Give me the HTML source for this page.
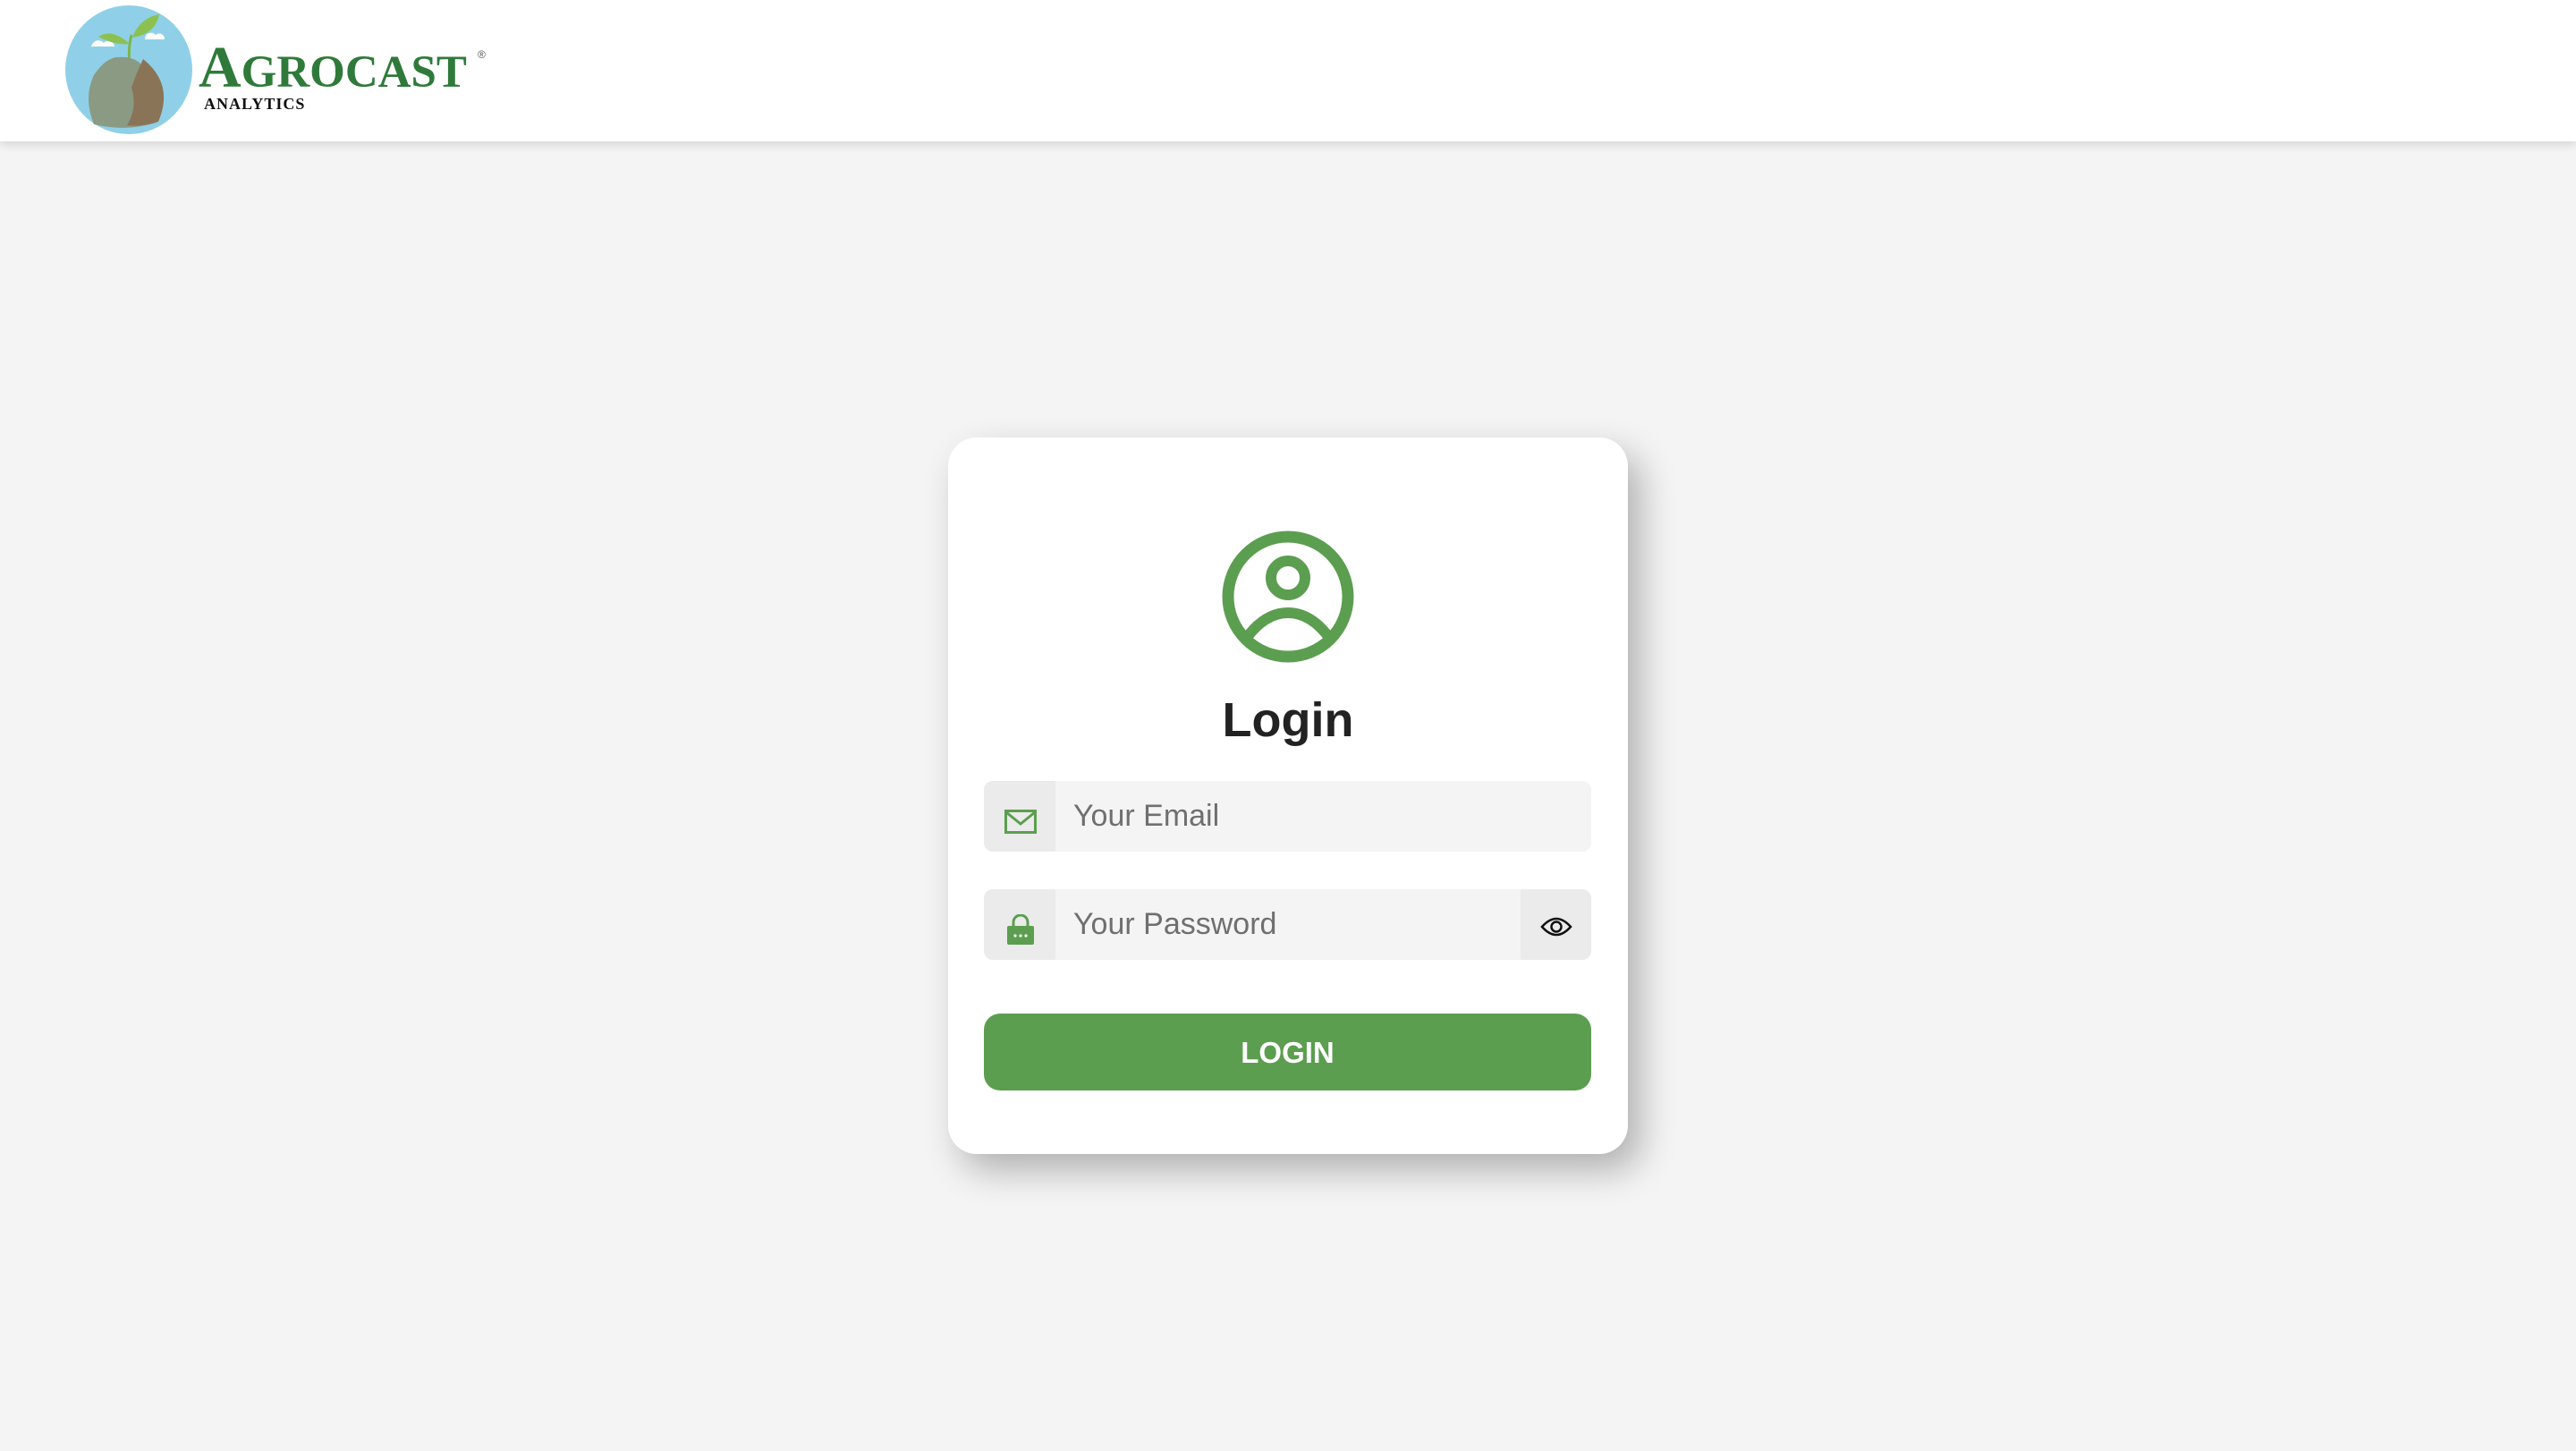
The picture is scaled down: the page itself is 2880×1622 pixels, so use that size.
<!DOCTYPE html>
<html><head><meta charset="utf-8"><style>
html,body{margin:0;padding:0;width:2880px;height:1622px;background:#f4f4f4;font-family:"Liberation Sans",sans-serif;overflow:hidden;position:relative}
.hdr{position:absolute;left:0;top:0;width:2880px;height:158px;background:#fff;box-shadow:0 4px 10px rgba(0,0,0,0.12)}
.card{position:absolute;left:1060px;top:489px;width:760px;height:801px;background:#fff;border-radius:32px;box-shadow:14px 18px 40px rgba(0,0,0,0.28)}
.inp{position:absolute;left:40px;width:679px;height:79px;background:#f4f4f4;border-radius:10px;overflow:hidden}
.ib{position:absolute;left:0;top:0;width:80px;height:79px;background:#ebebeb}
.ph{position:absolute;left:100px;top:0;line-height:79px;font-size:34px;color:#6f6f6f}
.btn{position:absolute;left:40px;top:644px;width:679px;height:86px;background:#5c9e50;border-radius:18px;color:#fff;font-weight:bold;font-size:33px;text-align:center;line-height:87px}
</style></head><body>
<div class="hdr">
<svg style="position:absolute;left:70px;top:4px" width="150" height="150" viewBox="0 0 150 150">
<ellipse cx="74" cy="74" rx="71" ry="72" fill="#8fd0e8"/>
<path d="M32 50 a8 8 0 0 1 14-6 a7 7 0 0 1 12 4 h-26z" fill="#fff"/>
<path d="M92 38 a7 7 0 0 1 12 -3 a6 6 0 0 1 10 5 h-22z" fill="#fff"/>
<path d="M75 70 q-2 -20 2 -35" stroke="#7cb648" stroke-width="3" fill="none"/>
<path d="M75 45 q-20 -18 -35 -8 q18 10 35 8z" fill="#8cc152"/>
<path d="M78 38 q8 -22 30 -26 q-4 22 -30 26z" fill="#8cc152"/>
<path d="M35 135 q-12 -30 0 -55 q12 -18 25 -20 q20 -2 30 10 q30 30 15 62 q-30 12 -70 3z" fill="#8b9a82"/>
<path d="M90 62 q35 28 17 70 q-15 6 -35 4 q12 -20 5 -42 q5 -15 13 -32z" fill="#8a7458"/>
</svg>
<div style="position:absolute;left:222px;top:46px;font-family:'Liberation Serif',serif;font-weight:bold;color:#2f7a3a;font-size:51px;letter-spacing:0px;line-height:60px"><span style="font-size:66px">A</span>GROCAST</div>
<div style="position:absolute;left:534px;top:54px;font-size:12px;color:#555">®</div>
<div style="position:absolute;left:228px;top:106px;font-family:'Liberation Serif',serif;font-weight:bold;font-size:18px;color:#111;letter-spacing:1px">ANALYTICS</div>
</div>
<div class="card">
<svg style="position:absolute;left:306px;top:104px" width="148" height="148" viewBox="0 0 148 148">
<circle cx="74" cy="74" r="67" fill="none" stroke="#5c9e50" stroke-width="13"/>
<circle cx="74" cy="53" r="19" fill="none" stroke="#5c9e50" stroke-width="12"/>
<path d="M27 121 Q48 92 74 92 Q100 92 121 121" fill="none" stroke="#5c9e50" stroke-width="12"/>
</svg>
<div style="position:absolute;left:0;width:760px;top:285px;text-align:center;font-size:54px;font-weight:bold;color:#222">Login</div>
<div class="inp" style="top:384px"><div class="ib"><svg style="position:absolute;left:23px;top:32px" width="36" height="27" viewBox="0 0 36 27"><rect x="1.5" y="1.5" width="33" height="24" fill="none" stroke="#5c9e50" stroke-width="3"/><path d="M2 3 L18 16 L34 3" fill="none" stroke="#5c9e50" stroke-width="3"/></svg></div><div class="ph">Your Email</div></div>
<div class="inp" style="top:505px"><div class="ib"><svg style="position:absolute;left:25px;top:28px" width="32" height="34" viewBox="0 0 32 34"><path d="M8 14 V9 a8 8 0 0 1 16 0 V14" fill="none" stroke="#5c9e50" stroke-width="3"/><rect x="1" y="13" width="30" height="21" rx="2" fill="#5c9e50"/><circle cx="10" cy="24" r="1.6" fill="#fff"/><circle cx="16" cy="24" r="1.6" fill="#fff"/><circle cx="22" cy="24" r="1.6" fill="#fff"/></svg></div><div class="ph">Your Password</div>
<div style="position:absolute;right:0;top:0;width:79px;height:79px;background:#ebebeb"><svg style="position:absolute;left:22px;top:30px" width="36" height="24" viewBox="0 0 36 24"><path d="M2 12 Q18 -6 34 12 Q18 30 2 12z" fill="none" stroke="#111" stroke-width="2.5"/><circle cx="18" cy="12" r="5.5" fill="none" stroke="#111" stroke-width="2.5"/></svg></div></div>
<div class="btn">LOGIN</div>
</div>
</body></html>
